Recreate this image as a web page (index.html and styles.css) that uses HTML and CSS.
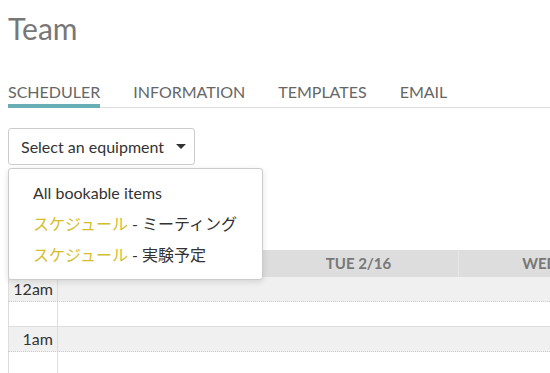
FILE: index.html
```html
<!DOCTYPE html>
<html lang="en">
<head>
	<meta charset="UTF-8">
	<title>Team</title>
	<link rel="stylesheet" href="styles.css">
</head>
<body>

	<div class="page">
		<h1 class="title">Team</h1>

		<nav class="tabs">
			<a class="tab active">SCHEDULER</a>
			<a class="tab">INFORMATION</a>
			<a class="tab">TEMPLATES</a>
			<a class="tab">EMAIL</a>
		</nav>

		<div class="picker">
			<button class="picker-btn">Select an equipment <span class="caret"></span></button>
			<ul class="picker-menu">
				<li>All bookable items</li>
				<li><span class="group">スケジュール</span> - ミーティング</li>
				<li><span class="group">スケジュール</span> - 実験予定</li>
			</ul>
		</div>

		<div class="toolbar">
			<button class="today">Today</button>
		</div>

		<div class="calendar">
			<div class="cal-head">
				<div class="time-col"></div>
				<div class="day">MON 2/15</div>
				<div class="day">TUE 2/16</div>
				<div class="day">WED 2/17</div>
			</div>
			<div class="slot half">
				<div class="time-col">12am</div>
				<div class="cells"></div>
			</div>
			<div class="slot">
				<div class="time-col"></div>
				<div class="cells"></div>
			</div>
			<div class="slot half">
				<div class="time-col">1am</div>
				<div class="cells"></div>
			</div>
			<div class="slot">
				<div class="time-col"></div>
				<div class="cells"></div>
			</div>
		</div>
	</div>

</body>
</html>
```

FILE: styles.css
```css
body {
	margin: 0;
	font-family: Lato, 'Noto Sans CJK JP', sans-serif;
	color: #333;
	background: #fff;
	overflow: hidden;
}

.page {
	padding-left: 8px;
}

.title {
	margin: 10px 0 0;
	font-size: 30px;
	font-weight: 400;
	line-height: 36px;
	color: #777;
}

.tabs {
	display: flex;
	gap: 33px;
	margin-top: 36px;
	border-bottom: 1px solid #ddd;
}

.tab {
	font-size: 16px;
	line-height: 20px;
	color: #666;
	padding-bottom: 2px;
	border-bottom: 4px solid transparent;
	margin-bottom: -1px;
}

.tab.active {
	border-bottom-color: #6aaeb5;
}

.picker {
	position: relative;
	margin-top: 20px;
	width: 255px;
}

.picker-btn {
	font-family: inherit;
	font-size: 16px;
	color: #333;
	background: #fff;
	border: 1px solid #ccc;
	border-radius: 3px;
	height: 37px;
	padding: 0 8px 0 12px;
	display: flex;
	align-items: center;
	gap: 12px;
}

.caret {
	width: 0;
	height: 0;
	border-left: 5px solid transparent;
	border-right: 5px solid transparent;
	border-top: 5px solid #333;
}

.picker-menu {
	position: absolute;
	top: 40px;
	left: 0;
	width: 253px;
	margin: 0;
	padding: 8px 0 9px;
	list-style: none;
	background: #fff;
	border: 1px solid #ccc;
	border-radius: 3px;
	box-shadow: 0 2px 6px rgba(0,0,0,0.12);
	z-index: 2;
}

.picker-menu li {
	font-size: 16px;
	line-height: 31px;
	padding-left: 24px;
	color: #333;
}

.group {
	color: #d4bd2e;
}

.toolbar {
	margin-top: 22px;
}

.today {
	height: 36px;
	width: 70px;
	border: none;
	border-radius: 3px;
	background: #5a9ea5;
	color: #fff;
	font-family: inherit;
	font-size: 15px;
}

.calendar {
	margin-top: 27px;
	width: 700px;
}

.cal-head {
	display: flex;
	background: #ddd;
	height: 27px;
}

.cal-head .time-col {
	border: none;
}

.day {
	width: 199px;
	border-left: 1px solid #e6e6e6;
	text-align: center;
	font-size: 15px;
	font-weight: 700;
	line-height: 27px;
	color: #777;
}

.slot {
	display: flex;
	height: 24px;
	border-bottom: 1px solid #ddd;
}

.slot.half {
	background: #f0f0f0;
	border-bottom: 1px dotted #ccc;
}

.time-col {
	flex: none;
	width: 50px;
	box-sizing: border-box;
	border-left: 1px solid #ddd;
	border-right: 1px solid #ddd;
	text-align: right;
	padding-right: 4px;
	font-size: 16px;
	line-height: 24px;
	color: #333;
}

.cells {
	flex: 1;
}
```
